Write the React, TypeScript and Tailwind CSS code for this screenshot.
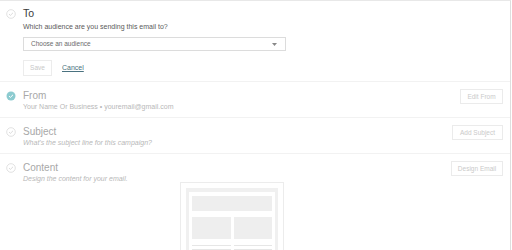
import React from "react";

const CheckCircle = ({ filled }: { filled?: boolean }) =>
  filled ? (
    <svg width="10" height="10" viewBox="0 0 10 10">
      <circle cx="5" cy="5" r="4.5" fill="#8ccbd0" />
      <path d="M3 5.1 L4.4 6.4 L7 3.8" stroke="#fff" strokeWidth="1" fill="none" />
    </svg>
  ) : (
    <svg width="10" height="10" viewBox="0 0 10 10">
      <circle cx="5" cy="5" r="4.3" fill="none" stroke="#d9d9d9" strokeWidth="0.8" />
      <path d="M3 5.1 L4.4 6.4 L7 3.8" stroke="#d2d2d2" strokeWidth="0.8" fill="none" />
    </svg>
  );

const GhostButton = ({ label, w }: { label: string; w: string }) => (
  <div
    className={`${w} h-[15px] border border-[#ebebeb] flex items-center justify-center text-[6.5px] text-[#cacaca]`}
  >
    {label}
  </div>
);

const Row = ({
  title,
  sub,
  italic,
  filled,
  btn,
  btnW,
  last,
  children,
}: {
  title: string;
  sub: string;
  italic?: boolean;
  filled?: boolean;
  btn: string;
  btnW: string;
  last?: boolean;
  children?: React.ReactNode;
}) => (
  <div className={`flex shrink-0 ${last ? "flex-1" : "h-[36px] border-b border-[#f2f2f2]"}`}>
    <div className="w-[23px] pl-[6px] pt-[9px] shrink-0">
      <CheckCircle filled={filled} />
    </div>
    <div className="flex-1 pt-[7px]">
      <div className="text-[10px] leading-[13px] text-[#a8a8a8]">{title}</div>
      <div
        className={`text-[7px] leading-[10px] text-[#b8b8b8] ${italic ? "italic" : ""}`}
      >
        {sub}
      </div>
      {children}
    </div>
    <div className="pt-[7px] pr-[7px]">
      <GhostButton label={btn} w={btnW} />
    </div>
  </div>
);

export default function App() {
  return (
    <div
      className="w-[512px] h-[250px] bg-white overflow-hidden flex"
      style={{ fontFamily: "'Liberation Sans', Arial, sans-serif" }}
    >
      <div className="w-[511px] h-full border-t border-[#e8e8e8] border-r border-r-[#dedede] flex flex-col">
        {/* To */}
        <div className="flex h-[81px] border-b border-[#f2f2f2] shrink-0">
          <div className="w-[23px] pl-[6px] pt-[8px] shrink-0">
            <CheckCircle />
          </div>
          <div className="flex-1 pt-[6px]">
            <div className="text-[10.5px] leading-[13px] text-[#3a3a3a]">To</div>
            <div className="text-[7px] leading-[11px] text-[#5a5a5a] mt-[1px]">
              Which audience are you sending this email to?
            </div>
            <div className="mt-[5px] w-[263px] h-[14px] border border-[#dcdcdc] flex items-center justify-between pl-[7px] pr-[8px]">
              <span className="text-[6.5px] text-[#6a6a6a]">Choose an audience</span>
              <svg width="5" height="3" viewBox="0 0 5 3">
                <path d="M0 0 H5 L2.5 3 Z" fill="#888" />
              </svg>
            </div>
            <div className="flex items-center mt-[9px] gap-[10px]">
              <div className="w-[29px] h-[16px] border border-[#ececec] flex items-center justify-center text-[6.5px] text-[#c8c8c8]">
                Save
              </div>
              <span className="text-[7px] text-[#4a7280] underline underline-offset-[1px]">
                Cancel
              </span>
            </div>
          </div>
        </div>

        <Row
          title="From"
          sub="Your Name Or Business • youremail@gmail.com"
          filled
          btn="Edit From"
          btnW="w-[43px]"
        />
        <Row
          title="Subject"
          sub="What's the subject line for this campaign?"
          italic
          btn="Add Subject"
          btnW="w-[51px]"
        />
        <Row
          title="Content"
          sub="Design the content for your email."
          italic
          btn="Design Email"
          btnW="w-[52px]"
          last
        >
          <div className="ml-[157px] -mt-[2px] w-[104px] h-[80px] border border-[#ececec] border-b-0 pt-[5px] px-[5px]">
            <div className="h-full bg-[#f0f0f0] pt-[4px] px-[3px]">
              <div className="h-full bg-white pt-[4px] px-[3px] flex flex-col gap-[6px]">
                <div className="h-[15px] bg-[#eeeeee] shrink-0" />
                <div className="flex gap-[3px] shrink-0">
                  <div className="flex-1 h-[22px] bg-[#eeeeee]" />
                  <div className="flex-1 h-[22px] bg-[#eeeeee]" />
                </div>
                <div className="flex gap-[3px] shrink-0">
                  <div className="flex-1 flex flex-col gap-[3px]">
                    <div className="h-[1px] bg-[#e6e6e6]" />
                    <div className="h-[1px] bg-[#e6e6e6]" />
                  </div>
                  <div className="flex-1 flex flex-col gap-[3px]">
                    <div className="h-[1px] bg-[#e6e6e6]" />
                    <div className="h-[1px] bg-[#e6e6e6]" />
                  </div>
                </div>
              </div>
            </div>
          </div>
        </Row>
      </div>
    </div>
  );
}
